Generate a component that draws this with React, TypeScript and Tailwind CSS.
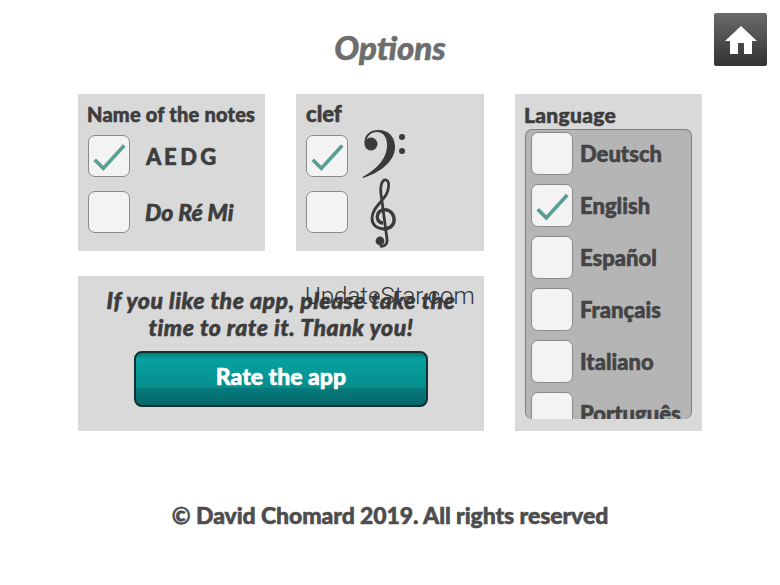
import React from 'react';

const font = "font-['Lato','Noto_Sans',sans-serif]";
const heavy = '[-webkit-text-stroke:0.55px_currentColor]';

const Check = () => (
  <svg viewBox="0 0 42 42" className="h-full w-full" fill="none">
    <path d="M6 25 L15 34 L37 10" stroke="#5a9e94" strokeWidth="3.8" />
  </svg>
);

const CheckBox: React.FC<{ checked?: boolean; className?: string }> = ({ checked, className = '' }) => (
  <div className={`h-[42px] w-[42px] shrink-0 rounded-[7px] border border-[#8a8a8a] bg-[#f3f3f3] ${className}`}>
    {checked && <Check />}
  </div>
);

const BassClef = () => (
  <svg viewBox="0 0 46 50" className="h-[50px] w-[46px]" fill="#3a3a3a">
    <circle cx="9" cy="15" r="6.5" />
    <path d="M2.5 14 C2 5 9 1 16 1 C28 1 33 9 33 18 C33 33 17 44 1 49 L0.5 48 C13 41 25 31 25 16 C25 8 21 3 15 3 C9 3 5 7 4 13 Z" />
    <circle cx="40" cy="8" r="3" />
    <circle cx="40" cy="22" r="3" />
  </svg>
);

const TrebleClef = () => (
  <svg viewBox="0 0 28 70" className="h-[70px] w-[28px]" fill="none" stroke="#3a3a3a">
    <path d="M14 51 C7 50 3 46 3 40 C3 31 12 25 17 17 C20 12 21 3 17 2 C13 1 11 8 12 16 L18 61 C19 67 14 69 11 68" strokeWidth="2.8" />
    <path d="M14 51 C22 51 26 46 25 40 C24 34 19 31 14 32 C9 33 7 38 9 42 C10 44 12 45 14 45" strokeWidth="3.4" />
    <circle cx="11" cy="63" r="4.4" fill="#3a3a3a" stroke="none" />
  </svg>
);

const languages = [
  { name: 'Deutsch' },
  { name: 'English', checked: true },
  { name: 'Español' },
  { name: 'Français' },
  { name: 'Italiano' },
  { name: 'Português' },
];

export default function App() {
  return (
    <div className={`relative h-[585px] w-[780px] overflow-hidden bg-white text-[#3d3d3d] ${font}`}>
      <button className="absolute left-[714px] top-[13px] flex h-[53px] w-[53px] items-center justify-center rounded-[2px] bg-gradient-to-b from-[#6b6b6b] to-[#333333]">
        <svg viewBox="0 0 32 28" className="h-[28px] w-[32px]" fill="#ffffff">
          <path d="M16 0 L32 15 L27 15 L27 28 L19 28 L19 17 L13 17 L13 28 L5 28 L5 15 L0 15 Z" />
        </svg>
      </button>

      <h1 className={`pt-[29px] text-center text-[33px] leading-[37px] font-black italic text-[#6d6d6d] ${heavy}`}>Options</h1>

      <div className="ml-[78px] mt-[28px] grid w-[624px] grid-cols-[187px_188px_187px] grid-rows-[157px_155px] gap-x-[31px] gap-y-[25px]">
        <section className="bg-[#d9d9d9] pl-[10px] pt-[8px]">
          <div className={`-ml-[1px] whitespace-nowrap text-[20px] leading-[24px] font-black tracking-[0.2px] ${heavy}`}>Name of the notes</div>
          <div className="mt-[9px] flex items-center gap-[16px]">
            <CheckBox checked />
            <span className={`text-[22px] font-black tracking-[-0.9px] ${heavy}`}>A E D G</span>
          </div>
          <div className="mt-[14px] flex items-center gap-[15px]">
            <CheckBox />
            <span className={`text-[23px] font-black italic ${heavy}`}>Do Ré Mi</span>
          </div>
        </section>

        <section className="bg-[#d9d9d9] pl-[10px] pt-[8px]">
          <div className={`text-[22px] leading-[24px] font-black ${heavy}`}>clef</div>
          <div className="mt-[9px] flex items-start">
            <div className="flex flex-col gap-[14px]">
              <CheckBox checked />
              <CheckBox />
            </div>
            <div className="ml-[14px] -mt-[6px] flex flex-col">
              <BassClef />
              <div className="ml-[7px] -mt-[1px]">
                <TrebleClef />
              </div>
            </div>
          </div>
        </section>

        <section className="row-span-2 bg-[#d9d9d9] pl-[10px] pt-[8px]">
          <div className={`-ml-[1px] text-[21px] leading-[25px] font-black tracking-[0.3px] ${heavy}`}>Language</div>
          <div className="mt-[2px] h-[290px] w-[167px] overflow-hidden rounded-[7px] border border-[#7f7f7f] border-b-0 bg-[#b5b5b5] pl-[5px] pt-[2px]">
            <div className="flex flex-col gap-[9px]">
              {languages.map((l) => (
                <div key={l.name} className="flex h-[43px] items-center gap-[7px]">
                  <CheckBox checked={l.checked} className="h-[43px]" />
                  <span className={`text-[22px] font-black text-[#444444] ${heavy}`}>{l.name}</span>
                </div>
              ))}
            </div>
          </div>
        </section>

        <section className="relative col-span-2 bg-[#d9d9d9] pt-[11px] text-center">
          <p className={`text-[23px] leading-[27px] font-black italic tracking-[0.55px] ${heavy}`}>
            If you like the app, please take the
            <br />
            time to rate it. Thank you!
          </p>
          <button className={`mx-auto mt-[10px] flex h-[56px] w-[294px] items-center justify-center rounded-[8px] border-2 border-[#14302f] bg-[linear-gradient(to_bottom,#057a7a_0%,#07a19f_12%,#058f8e_66%,#067b7c_68%,#04686a_100%)] pb-[6px] text-[23px] font-black text-white ${heavy}`}>
            Rate the app
          </button>
          <span className="absolute left-[227px] top-[2px] font-['Roboto',sans-serif] text-[24px] font-light text-[#333333]">
            UpdateStar.com
          </span>
        </section>
      </div>

      <p className={`mt-[70px] text-center text-[23px] leading-[28px] font-black tracking-[-0.08px] text-[#4d4d4d] ${heavy}`}>
        © David Chomard 2019. All rights reserved
      </p>
    </div>
  );
}
